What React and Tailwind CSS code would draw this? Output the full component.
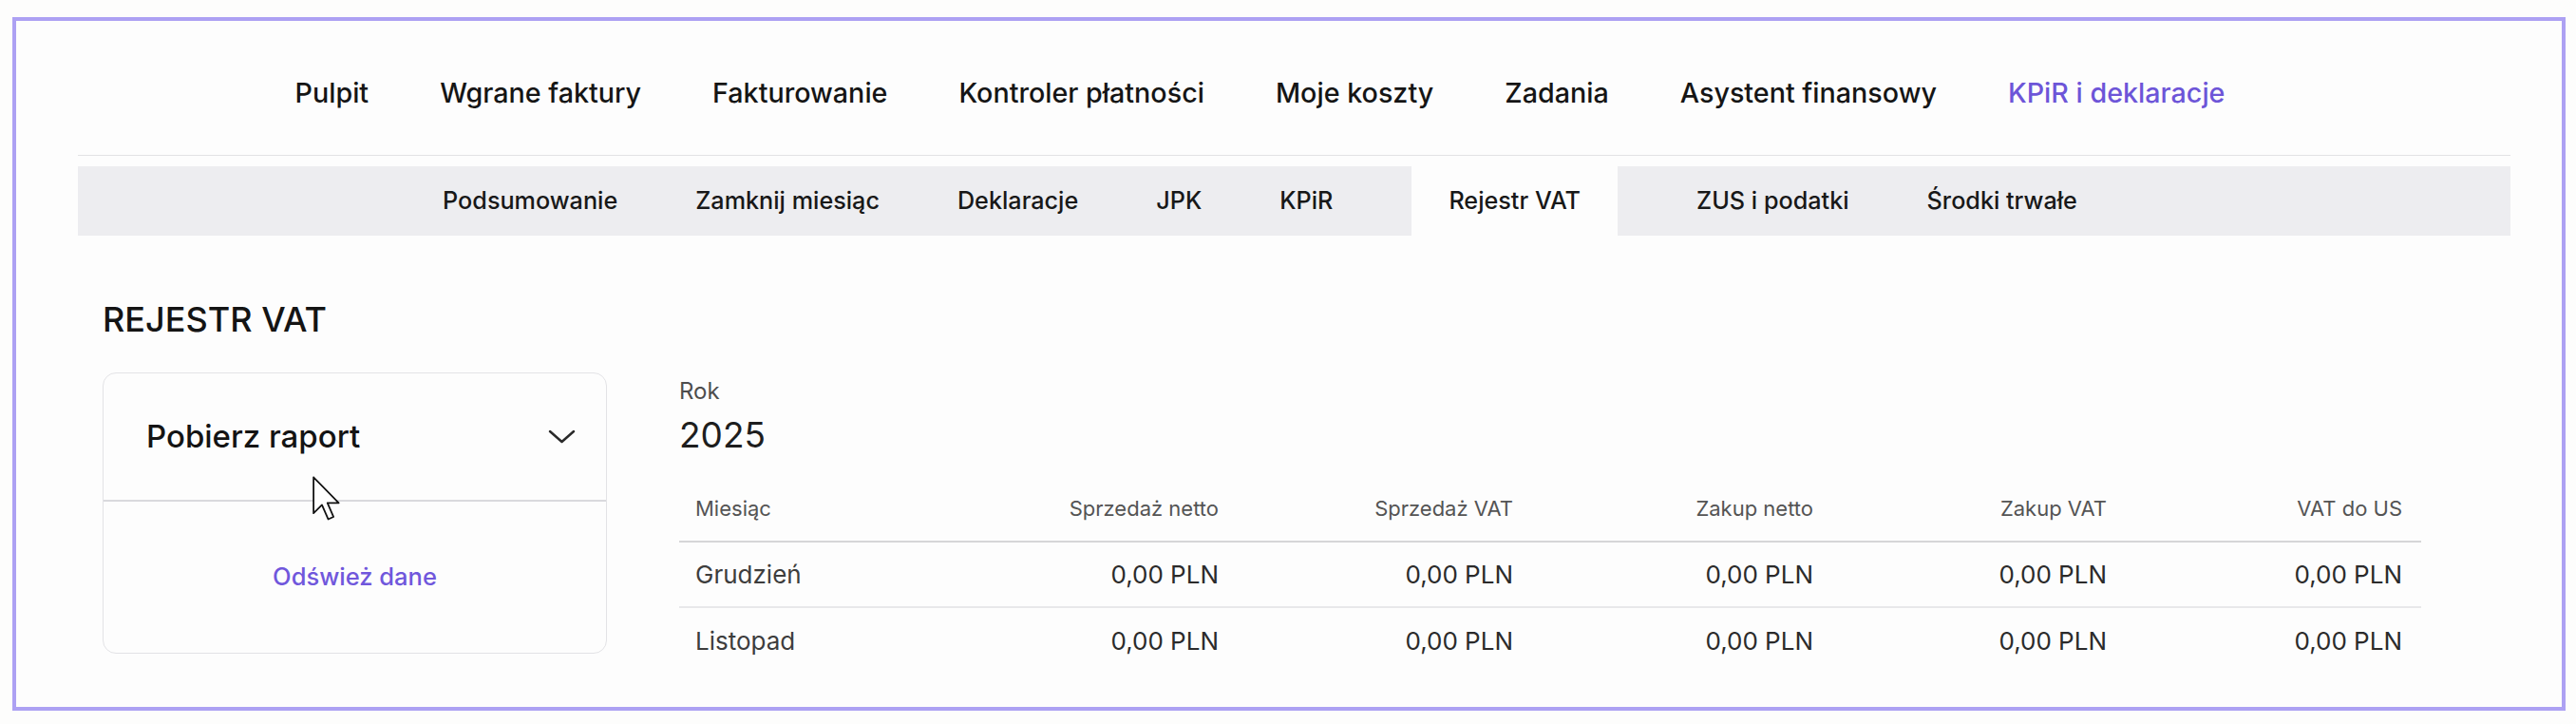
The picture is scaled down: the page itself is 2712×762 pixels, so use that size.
import React from "react";

const mainNav = [
  "Pulpit",
  "Wgrane faktury",
  "Fakturowanie",
  "Kontroler płatności",
  "Moje koszty",
  "Zadania",
  "Asystent finansowy",
  "KPiR i deklaracje",
];

const subNav = [
  "Podsumowanie",
  "Zamknij miesiąc",
  "Deklaracje",
  "JPK",
  "KPiR",
  "Rejestr VAT",
  "ZUS i podatki",
  "Środki trwałe",
];

const columns = [
  "Miesiąc",
  "Sprzedaż netto",
  "Sprzedaż VAT",
  "Zakup netto",
  "Zakup VAT",
  "VAT do US",
];

const rows = [
  { month: "Grudzień", values: ["0,00 PLN", "0,00 PLN", "0,00 PLN", "0,00 PLN", "0,00 PLN"] },
  { month: "Listopad", values: ["0,00 PLN", "0,00 PLN", "0,00 PLN", "0,00 PLN", "0,00 PLN"] },
];

const gridCols = "grid grid-cols-[285px_303px_310px_316px_309px_311px]";

const ChevronDown = () => (
  <svg width="29" height="15" viewBox="0 0 29 15" fill="none">
    <path
      d="M2 2 L14.5 13 L27 2"
      stroke="#2a2a2a"
      strokeWidth="2.5"
      strokeLinecap="round"
      strokeLinejoin="round"
    />
  </svg>
);

const Cursor = () => (
  <svg
    width="32"
    height="48"
    viewBox="0 0 12 19"
    className="absolute left-[328px] top-[501px]"
  >
    <path
      d="M0.5 0.5 L0.5 15.5 L4 12 L6.6 18 L8.8 17 L6.3 11.2 L11 11.2 Z"
      fill="#ffffff"
      stroke="#111111"
      strokeWidth="0.7"
      strokeLinejoin="round"
    />
  </svg>
);

export default function App() {
  return (
    <div className="relative w-[2712px] h-[762px] bg-[#fdfdfc] pt-[18px] pl-[13px] font-['Inter',sans-serif]">
      <div className="w-[2688px] h-[730px] border-4 border-[#ada1f3] bg-[#fdfdfd]">
        <div className="ml-[65px] mr-[54px]">
          <nav className="flex h-[141px] items-center justify-center gap-[75px] pt-[10px] pr-[72px]">
            {mainNav.map((item) => (
              <span
                key={item}
                className={
                  item === "KPiR i deklaracje"
                    ? "text-[28.7px] font-medium text-[#6d55d8]"
                    : "text-[28.7px] font-medium text-[#151515]"
                }
              >
                {item}
              </span>
            ))}
          </nav>
          <div className="h-px bg-[#e2e2e4]" />
          <div className="mt-[11px] flex h-[73px] items-stretch justify-center bg-[#ededf0] pr-[72px]">
            {subNav.map((item) =>
              item === "Rejestr VAT" ? (
                <span
                  key={item}
                  className="mx-[42px] flex items-center bg-[#fdfdfd] px-[39px] text-[25.2px] font-medium text-[#181818]"
                >
                  {item}
                </span>
              ) : (
                <span
                  key={item}
                  className="flex items-center px-[41px] text-[25.2px] font-medium text-[#181818]"
                >
                  {item}
                </span>
              )
            )}
          </div>
        </div>

        <div className="ml-[91px]">
          <h1 className="mt-[66px] text-[36px] leading-[44px] font-medium text-[#141414]">
            REJESTR VAT
          </h1>

          <div className="mt-[34px] flex gap-[76px]">
            <div className="flex h-[296px] w-[531px] flex-col rounded-[14px] border-[1.5px] border-[#e3e3e6]">
              <div className="flex h-[135px] items-center justify-between border-b-2 border-[#dadadd] pl-[45px] pr-[32px]">
                <span className="text-[33px] font-medium text-[#141414]">Pobierz raport</span>
                <ChevronDown />
              </div>
              <div className="flex flex-1 items-center justify-center">
                <span className="text-[25.5px] font-medium text-[#7057dc]">Odśwież dane</span>
              </div>
            </div>

            <div className="w-[1834px] pt-[5px]">
              <div className="text-[24px] leading-[30px] text-[#4d4d4d]">Rok</div>
              <div className="mt-[9px] text-[37px] leading-[44px] text-[#1e1e1e]">2025</div>

              <div className="mt-[22px]">
                <div className={`${gridCols} h-[69px] items-center border-b-2 border-[#d6d6d8] text-[22px] text-[#545454]`}>
                  {columns.map((col, i) => (
                    <div key={col} className={i === 0 ? "pl-[17px]" : "pr-[20px] text-right"}>
                      {col}
                    </div>
                  ))}
                </div>
                {rows.map((row, r) => (
                  <div
                    key={row.month}
                    className={
                      r === 0
                        ? `${gridCols} h-[69px] items-center border-b-2 border-[#e8e8ea] text-[26px] text-[#2b2b2b]`
                        : `${gridCols} h-[69px] items-center text-[26px] text-[#2b2b2b]`
                    }
                  >
                    <div className="pl-[17px] text-[#3d3d3d]">{row.month}</div>
                    {row.values.map((v, i) => (
                      <div key={i} className="pr-[20px] text-right">
                        {v}
                      </div>
                    ))}
                  </div>
                ))}
              </div>
            </div>
          </div>
        </div>
      </div>
      <Cursor />
    </div>
  );
}
